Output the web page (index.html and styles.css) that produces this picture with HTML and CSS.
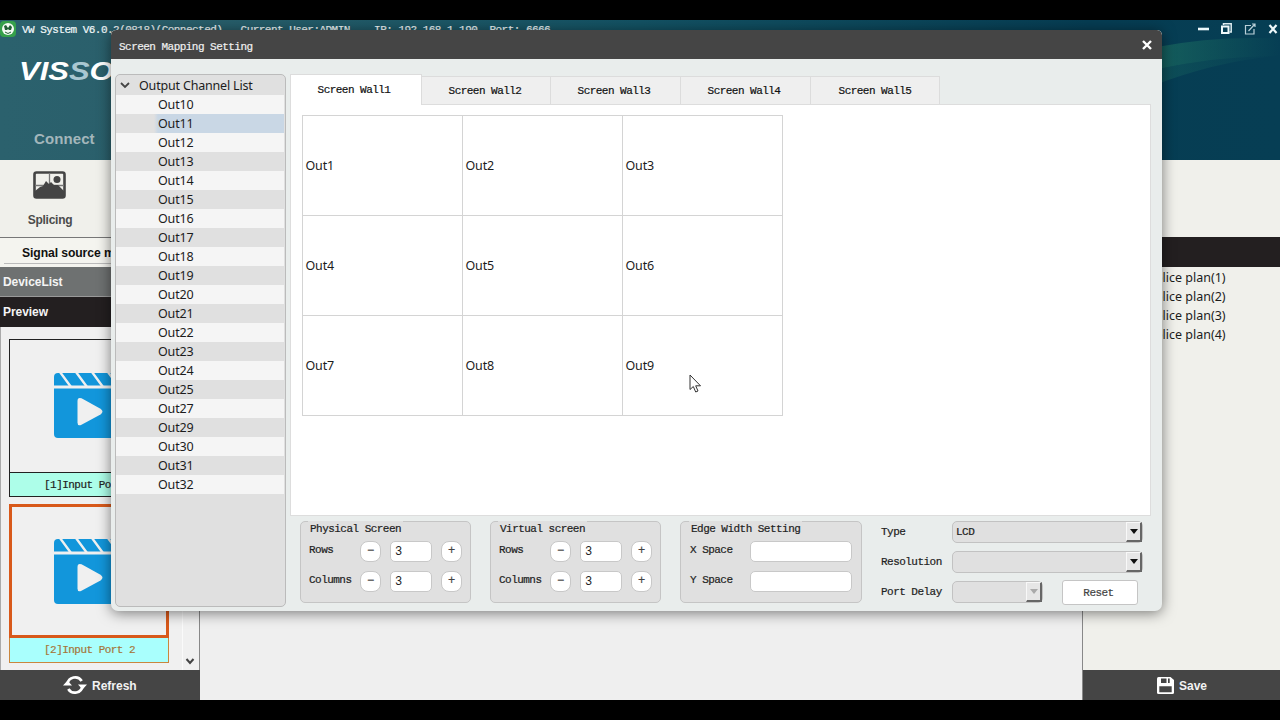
FILE: index.html
```html
<!DOCTYPE html>
<html lang="en">
<head>
<meta charset="utf-8">
<title>VW System</title>
<link rel="stylesheet" href="styles.css">
</head>
<body>
<svg class="defs" width="0" height="0">
  <symbol id="clapper" viewBox="0 0 76 66">
    <path fill="#1296db" d="M4 0H72Q76 0 76 4V12.500H0V4Q0 0 4 0Z"/>
    <path fill="#1296db" d="M0 15.500H76V61Q76 65 72 65H4Q0 65 0 61Z"/>
    <path stroke="#f0f0f0" stroke-width="2.400" d="M6 -1L17 14M22 -1L33 14M38 -1L49 14M54 -1L65 14"/>
    <path fill="#f0f0f0" d="M23.500 28Q23.500 24 27.500 25.300L46.500 35.700Q50.500 38.500 46.500 41.500L27.500 51.700Q23.500 53.500 23.500 49.500Z"/>
  </symbol>
</svg>
<div class="app">
  <header class="banner">
    <svg class="swoosh" viewBox="0 0 180 70" preserveAspectRatio="none">
      <defs><linearGradient id="glow"><stop offset="0" stop-color="#1c6f61" stop-opacity=".9"/><stop offset="1" stop-color="#1c6f61" stop-opacity="0"/></linearGradient></defs>
      <path fill="url(#glow)" opacity=".75" d="M0 12Q90 -2 180 2V22Q90 22 0 38Z"/>
      <path fill="url(#glow)" opacity=".4" d="M0 38Q90 22 180 22Q90 28 0 56Z"/>
    </svg>
    <div class="titlebar">
      <svg class="appicon" width="16" height="16" viewBox="0 0 16 16"><rect width="16" height="16" rx="4" fill="#36a04b"/><circle cx="8" cy="8" r="6" fill="#f4faf4"/><path fill="#225f35" d="M4 5L6 4L8 7L10 4L12 6L11 9H9L8 8L7 9H5Z"/><path d="M5 11Q8 14 11 11" fill="none" stroke="#225f35"/></svg>
      <span class="mono apptitle">VW System V6.0.2(0818)(Connected)   Current User:ADMIN    IP: 192.168.1.190  Port: 6666</span>
      <svg class="winbtns" width="84" height="16" viewBox="0 0 84 16" fill="none">
        <path stroke="#eef8fa" stroke-width="2.600" d="M0 8H11"/>
        <path stroke="#dcebf0" stroke-width="1.500" d="M25.500 4V2.700H33.200V11H31.500"/><rect x="24" y="5.500" width="6.500" height="6.500" stroke="#eef8fa" stroke-width="2"/>
        <path stroke="#b9cfd8" stroke-width="1.200" d="M53 4.500H47.500V13H56V8M50.500 10L56.500 3.500M54 3H57V6"/>
        <path stroke="#eef8fa" stroke-width="2.200" d="M71.500 4L78.500 12M78.500 4L71.500 12"/>
      </svg>
    </div>
    <div class="logo">VIS<span class="logo-s">S</span>O</div>
    <div class="connect">Connect</div>
  </header>
  <section class="toolbar">
    <div class="tool">
      <svg width="33" height="28" viewBox="0 0 33 28"><rect x="1.500" y="1.500" width="30" height="25" rx="2" fill="none" stroke="#444" stroke-width="2.600"/><path stroke="#777" stroke-width="1.300" d="M16.500 2V13M2 14.500H31"/><circle cx="24" cy="8.500" r="3.500" fill="#444"/><path fill="#444" d="M2 20L7 16L10 15L13 10L16 13L18 11L21 14L25 14L31 20V26H2Z"/></svg>
      <span>Splicing</span>
    </div>
  </section>
  <main class="workspace">
    <aside class="sources">
      <div class="sources-title"><span>Signal source manage</span></div>
      <div class="bar device">DeviceList</div>
      <div class="bar preview">Preview</div>
      <div class="ports">
        <div class="cards">
          <div class="card"><div class="thumb"><svg width="76" height="66"><use href="#clapper"/></svg></div><div class="caption mono">[1]Input Port 1</div></div>
          <div class="card active"><div class="thumb"><svg width="76" height="66"><use href="#clapper"/></svg></div><div class="caption mono">[2]Input Port 2</div></div>
        </div>
        <div class="scroll"><svg width="10" height="7" viewBox="0 0 10 7"><path fill="none" stroke="#444" stroke-width="2" d="M1.500 1L5 5L8.500 1"/></svg></div>
      </div>
      <div class="footer refresh">
        <svg width="24" height="20" viewBox="0 0 24 20"><path fill="none" stroke="#fff" stroke-width="2.700" d="M4.500 9A7.700 7.700 0 0 1 18.700 6M19.500 11A7.700 7.700 0 0 1 5.300 14"/><path fill="#fff" d="M0 9.500H9L4.500 14.500ZM15 10.500H24L19.500 5.500Z" transform="matrix(1 0 0 -1 0 20)"/></svg>
        <span>Refresh</span>
      </div>
    </aside>
    <div class="canvas"></div>
    <aside class="plans">
      <div class="plans-head"></div>
      <div class="plan-list"><div>Splice plan(1)</div><div>Splice plan(2)</div><div>Splice plan(3)</div><div>Splice plan(4)</div></div>
      <div class="footer save">
        <svg width="17" height="17" viewBox="0 0 17 17"><path fill="#fff" d="M1.500 0H13.500L17 3V15.500Q17 17 15.500 17H1.500Q0 17 0 15.500V1.500Q0 0 1.500 0Z"/><path fill="#454545" d="M4 1.500H9.500V6H4ZM11 1.500H12.700V6H11ZM2.300 9.200H14.700V15.200H2.300Z"/></svg>
        <span>Save</span>
      </div>
    </aside>
  </main>
</div>

<div class="dialog">
  <div class="dialog-title"><span class="mono">Screen Mapping Setting</span><svg width="10" height="10" viewBox="0 0 10 10"><path stroke="#fff" stroke-width="2.400" d="M1 1L9 9M9 1L1 9"/></svg></div>
  <div class="dialog-body">
    <div class="tree">
      <div class="row root"><svg width="10" height="7" viewBox="0 0 10 7"><path fill="none" stroke="#444" stroke-width="1.800" d="M1 1L5 5L9 1"/></svg>Output Channel List</div>
      <div class="row">Out10</div><div class="row selected">Out11</div><div class="row">Out12</div><div class="row">Out13</div><div class="row">Out14</div><div class="row">Out15</div><div class="row">Out16</div><div class="row">Out17</div><div class="row">Out18</div><div class="row">Out19</div><div class="row">Out20</div><div class="row">Out21</div><div class="row">Out22</div><div class="row">Out23</div><div class="row">Out24</div><div class="row">Out25</div><div class="row">Out27</div><div class="row">Out29</div><div class="row">Out30</div><div class="row">Out31</div><div class="row">Out32</div>
    </div>
    <div class="content">
      <div class="tabs mono"><div class="tab current">Screen Wall1</div><div class="tab">Screen Wall2</div><div class="tab">Screen Wall3</div><div class="tab">Screen Wall4</div><div class="tab">Screen Wall5</div></div>
      <div class="pane">
        <div class="wall"><div>Out1</div><div>Out2</div><div>Out3</div><div>Out4</div><div>Out5</div><div>Out6</div><div>Out7</div><div>Out8</div><div>Out9</div></div>
      </div>
      <div class="settings mono">
        <div class="group">
          <div class="legend">Physical Screen</div>
          <div class="field"><label>Rows</label><button>−</button><div class="num">3</div><button>+</button></div>
          <div class="field"><label>Columns</label><button>−</button><div class="num">3</div><button>+</button></div>
        </div>
        <div class="group">
          <div class="legend">Virtual screen</div>
          <div class="field"><label>Rows</label><button>−</button><div class="num">3</div><button>+</button></div>
          <div class="field"><label>Columns</label><button>−</button><div class="num">3</div><button>+</button></div>
        </div>
        <div class="group edge">
          <div class="legend">Edge Width Setting</div>
          <div class="field"><label>X Space</label><div class="num"></div></div>
          <div class="field"><label>Y Space</label><div class="num"></div></div>
        </div>
        <div class="options">
          <div class="option"><label>Type</label><div class="select"><span>LCD</span><i></i></div></div>
          <div class="option"><label>Resolution</label><div class="select"><span></span><i></i></div></div>
          <div class="option"><label>Port Delay</label><div class="select short"><span></span><i></i></div><div class="reset">Reset</div></div>
        </div>
      </div>
    </div>
  </div>
</div>
<svg class="cursor" width="13" height="20" viewBox="0 0 13 20"><path fill="#fff" stroke="#333" d="M1 1V15.500L4.300 12.500L6.700 18L9 17L6.700 11.800H11.500Z"/></svg>
</body>
</html>
```
FILE: styles.css
```css
* { box-sizing: border-box; }
body { margin: 0; width: 1280px; height: 720px; overflow: hidden; background: #000; padding: 20px 0; position: relative; font-family: "Noto Sans", "Open Sans", sans-serif; font-size: 12.5px; letter-spacing: -0.18px; color: #1c1c1c; }
svg { flex: none; display: block; }
.defs { position: absolute; }
.mono { font-family: "Liberation Mono", monospace; font-size: 11px; letter-spacing: -0.53px; white-space: pre; -webkit-text-stroke: 0.2px currentColor; }
.app { height: 680px; display: flex; flex-direction: column; overflow: hidden; }

.banner { height: 140px; flex: none; position: relative; background: linear-gradient(90deg, #2b616d 0, #2a5f6b 12%, #135263 50%, #063d53 85%, #063e54 100%); }
.swoosh { position: absolute; right: 0; top: 17px; width: 125px; height: 60px; }
.titlebar { display: flex; align-items: center; height: 18px; position: relative; }
.appicon { margin-top: -1px; }
.apptitle { color: #f0f7f8; margin: 2px 0 0 6px; flex: 1; }
.winbtns { margin-right: -2px; }
.logo { font: italic bold 26px/30px "Liberation Sans", sans-serif; color: #fff; width: 90px; margin: 18px 0 0 19px; letter-spacing: 0; transform: scaleX(1.19); transform-origin: 0 0; }
.logo-s { color: #a9c7d1; }
.connect { font: bold 15px/20px "Liberation Sans", sans-serif; color: #a3b6bb; margin: 43px 0 0 34px; letter-spacing: .1px; }

.toolbar { height: 77px; flex: none; background: #f0f0eb; }
.tool { width: 100px; padding-top: 11px; display: flex; flex-direction: column; align-items: center; gap: 13px; font: bold 12px/17px "Liberation Sans", sans-serif; letter-spacing: -0.25px; color: #4b4b4b; }
.tool svg { margin-right: 1px; }

.workspace { flex: 1; display: flex; min-height: 0; }
.sources { width: 200px; display: flex; flex-direction: column; background: #f0f0f0; font-family: "Liberation Sans", sans-serif; }
.sources-title { height: 30px; border-top: 1px solid #777; background: #f4f4ef; padding: 0 4px; font-weight: bold; font-size: 12.2px; letter-spacing: -0.1px; line-height: 30px; color: #111; white-space: nowrap; }
.sources-title span { display: block; height: 26px; padding-left: 18px; border-bottom: 1px solid #bbb; }
.bar { height: 30px; line-height: 31px; padding-left: 3px; font-weight: bold; font-size: 12px; letter-spacing: -0.05px; color: #f4f4f4; }
.device { background: #6e7171; border-bottom: 1px solid #9a9a9a; }
.preview { background: #231f20; }
.ports { flex: 1; min-height: 0; display: flex; border-left: 1px solid #aaa; border-right: 1px solid #888; overflow: hidden; }
.cards { width: 182px; padding: 12px 0 0 8px; border-right: 1px solid #fafafa; }
.card { width: 160px; height: 158px; border: 1px solid #222; margin-bottom: 7px; display: flex; flex-direction: column; }
.thumb { height: 133px; flex: none; border-bottom: 1px solid #222; padding: 33px 0 0 44px; }
.caption { flex: 1; height: 23px; overflow: hidden; background: #adfee9; line-height: 25px; padding-left: 34px; color: #222; }
.active { border-color: #c9863d; height: 159px; }
.active .thumb { border: 3px solid #d8591a; margin: -1px -1px 0; height: 134px; padding: 32px 0 0 42px; }
.active .caption { background: #a9fffd; color: #a5763a; }
.scroll { flex: 1; display: flex; align-items: flex-end; justify-content: center; padding: 0 2px 5px 0; }
.footer { height: 30px; background: #454545; color: #f2f2f2; font: bold 12px/30px "Liberation Sans", sans-serif; letter-spacing: 0; display: flex; align-items: center; gap: 5px; }
.footer span { padding-top: 2px; }
.refresh { padding-left: 63px; }
.canvas { flex: 1; background: #efefef; }
.plans { width: 198px; background: #f0f0eb; border-left: 1px solid #888; display: flex; flex-direction: column; }
.plans-head { height: 30px; background: #231f20; }
.plan-list { flex: 1; padding: 1px 0 0 65px; line-height: 19px; letter-spacing: 0; }
.save { padding-left: 74px; }

.dialog { position: absolute; left: 111px; top: 30px; width: 1051px; height: 581px; background: #e9edec; border-radius: 5px 5px 7px 7px; box-shadow: 0 2px 14px rgba(0,0,0,.5); display: flex; flex-direction: column; overflow: hidden; }
.dialog-title { height: 29px; background: #454545; border-radius: 5px 5px 0 0; color: #f0f0f0; display: flex; align-items: center; justify-content: space-between; padding: 4px 10px 0 8px; }
.dialog-title svg { margin-top: -4px; }
.dialog-body { flex: 1; display: flex; padding: 15px 11px 4px 4px; gap: 4px; }
.tree { width: 171px; height: 533px; border: 1px solid #bbb; border-radius: 5px; background: #e0e0e0; padding: 1px 1px 1px 0; line-height: 19px; }
.row { height: 19px; padding-left: 42px; white-space: nowrap; }
.row:nth-child(even) { background: #f5f5f5; }
.root { display: flex; align-items: center; gap: 9px; padding-left: 4px; }
.selected { background: linear-gradient(90deg, #e0e0e0 38px, #c9d7e5 42px); }
.content { width: 861px; display: flex; flex-direction: column; padding-top: 1px; }
.tabs { height: 30px; display: flex; align-items: flex-end; border-bottom: 1px solid #ddd; color: #111; }
.tab { width: 130px; height: 28px; background: #efefef; border: 1px solid #dcdcdc; border-left: 0; border-bottom: 0; line-height: 28px; text-align: center; padding-right: 3px; }
.tab:nth-child(2) { width: 129px; padding-right: 2px; }
.tab:last-child { width: 129px; padding-right: 0; }
.current { width: 132px; height: 31px; margin-bottom: -1px; background: #fff; line-height: 31px; padding-right: 4px; border-left: 1px solid #ddd; }
.pane { height: 411px; background: #fff; border: 1px solid #ddd; border-top: 0; padding: 10px 0 0 11px; }
.wall { width: 481px; height: 301px; display: grid; grid-template: repeat(3, 1fr) / repeat(3, 1fr); border-top: 1px solid #d4d4d4; border-left: 1px solid #d4d4d4; }
.wall div { border-right: 1px solid #d4d4d4; border-bottom: 1px solid #d4d4d4; display: flex; align-items: center; padding-left: 2.5px; }
.settings { display: flex; padding: 5px 0 0 10px; color: #222; white-space: nowrap; }
.group { width: 171px; height: 82px; border: 1px solid #c5c5c5; border-radius: 5px; background: #e0e0e0; margin-right: 19px; padding-left: 8px; flex: none; }
.legend { display: table; height: 14px; line-height: 16px; margin: -1px 0 3px -1px; padding: 0 2px; background: #e0e0e0; }
.field { display: flex; align-items: center; height: 22px; margin-bottom: 8px; }
.field label { width: 51px; flex: none; margin-top: -3px; }
.field button { flex: none; width: 21px; height: 21px; padding: 0; border: 1px solid #c8c8c8; border-radius: 8px; background: #fff; font: 12px/17px "Liberation Mono", monospace; color: #444; }
.num { flex: none; width: 42px; height: 21px; background: #fff; border: 1px solid #c8c8c8; border-radius: 5px; margin: 0 9px; padding-left: 4px; font-size: 12px; line-height: 20px; -webkit-text-stroke: 0; }
.edge { width: 182px; padding-left: 9px; }
.edge .num { width: 102px; }
.options { display: flex; flex-direction: column; gap: 8px; }
.option { display: flex; align-items: center; height: 22px; }
.option label { width: 71px; }
.select { width: 191px; height: 22px; background: #e0e0e0; border: 1px solid #c2c2c2; border-radius: 5px; display: flex; justify-content: space-between; align-items: center; padding-left: 3px; }
.select i { width: 16px; height: 20px; border: 1px solid; border-color: #f8f8f8 #666 #666 #f8f8f8; border-right-width: 2px; border-bottom-width: 2px; background: #e6e6e6; display: flex; align-items: center; justify-content: center; }
.select i::after { content: ""; border: 4px solid transparent; border-top: 5px solid #111; border-bottom: 0; }
.short { width: 91px; }
.short i::after { border-top-color: #aaa; }
.reset { width: 76px; height: 25px; margin-left: 19px; background: #fff; border: 1px solid #c5c5c5; border-radius: 3px; text-align: center; line-height: 24px; padding-right: 3px; color: #444; }
.cursor { position: absolute; left: 689px; top: 374px; }
```
